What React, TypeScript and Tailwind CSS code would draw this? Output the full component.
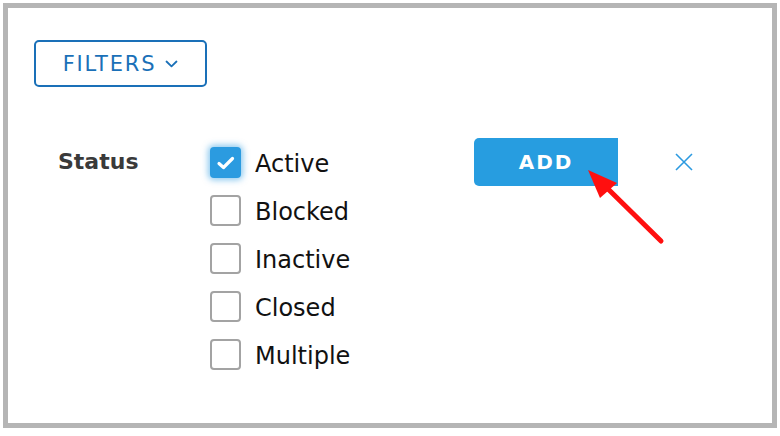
import React from "react";

const items = ["Active", "Blocked", "Inactive", "Closed", "Multiple"];

function Checkbox({ checked }: { checked: boolean }) {
  if (checked) {
    return (
      <div className="w-[31px] h-[31px] rounded-[4px] bg-[#2b9be0] shadow-[0_0_6px_2px_rgba(43,155,224,0.55)] flex items-center justify-center">
        <svg width="20" height="16" viewBox="0 0 20 16">
          <path d="M3 8.5 L7.5 12.5 L16.5 3.5" fill="none" stroke="#fff" strokeWidth="3.2" strokeLinecap="round" strokeLinejoin="round" />
        </svg>
      </div>
    );
  }
  return <div className="w-[31px] h-[31px] rounded-[4px] border-2 border-[#a3a3a3] bg-white" />;
}

export default function App() {
  return (
    <div className="w-[780px] h-[436px] bg-white p-[3px]" style={{ fontFamily: '"DejaVu Sans", sans-serif' }}>
      <div className="relative w-[774px] h-[425px] border-[5px] border-[#b5b5b5] pt-[32px] pl-[26px]">
        <button className="w-[173px] h-[47px] border-2 border-[#1a70b8] rounded-[5px] flex items-center justify-center gap-[9px] text-[#1a70b8]">
          <span className="text-[21px] tracking-[1.8px] leading-none mt-[2px]">FILTERS</span>
          <svg width="13" height="8" viewBox="0 0 13 8">
            <path d="M1.5 1.5 L6.5 6.3 L11.5 1.5" fill="none" stroke="#1a70b8" strokeWidth="1.8" strokeLinecap="round" strokeLinejoin="round" />
          </svg>
        </button>

        <div className="flex mt-[51px] ml-[24px]">
          <div className="w-[152px] pt-[11px] text-[22px] font-bold text-[#3a3a3a] leading-[26px]">Status</div>
          <div className="w-[264px] pt-[9px] flex flex-col gap-[17px]">
            {items.map((it, i) => (
              <div key={it} className="flex items-center h-[31px] gap-[14px]">
                <Checkbox checked={i === 0} />
                <span className="text-[24px] text-[#111] leading-none mt-[3px]">{it}</span>
              </div>
            ))}
          </div>
          <div className="w-[144px] h-[48px] bg-[#279de0] rounded-l-[5px] flex items-center justify-center text-white font-bold text-[20px] tracking-[2px]">
            ADD
          </div>
          <div className="ml-[57px] h-[48px] flex items-center">
            <svg width="18" height="18" viewBox="0 0 18 18">
              <path d="M1 1 L17 17 M17 1 L1 17" stroke="#2c9ae0" strokeWidth="1.6" />
            </svg>
          </div>
        </div>

        <svg className="absolute left-[-8px] top-[-8px] pointer-events-none" width="780" height="436" viewBox="0 0 780 436">
          <line x1="661" y1="241" x2="604" y2="185" stroke="#ff0f0f" strokeWidth="5" strokeLinecap="round" />
          <polygon points="588,170 617,183 600,198" fill="#ff0f0f" />
        </svg>
      </div>
    </div>
  );
}
